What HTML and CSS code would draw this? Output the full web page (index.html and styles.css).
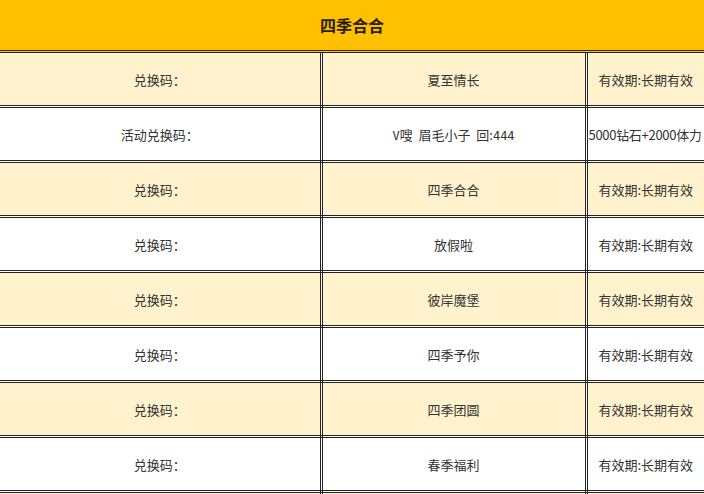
FILE: index.html
```html
<!DOCTYPE html>
<html lang="zh-CN">
<head>
<meta charset="utf-8">
<title>四季合合</title>
<link rel="stylesheet" href="styles.css">
</head>
<body>
<table class="codes">
  <colgroup>
    <col class="c-label">
    <col class="c-code">
    <col class="c-note">
  </colgroup>
  <thead>
    <tr><th colspan="3">四季合合</th></tr>
  </thead>
  <tbody>
    <tr class="cream"><td>兑换码：</td><td>夏至情长</td><td>有效期:长期有效</td></tr>
    <tr><td>活动兑换码：</td><td><span class="mono">V</span>嗖&nbsp;&nbsp;眉毛小子&nbsp;&nbsp;回:<span class="mono">444</span></td><td class="tight">5000钻石+2000体力</td></tr>
    <tr class="cream"><td>兑换码：</td><td>四季合合</td><td>有效期:长期有效</td></tr>
    <tr><td>兑换码：</td><td>放假啦</td><td>有效期:长期有效</td></tr>
    <tr class="cream"><td>兑换码：</td><td>彼岸魔堡</td><td>有效期:长期有效</td></tr>
    <tr><td>兑换码：</td><td>四季予你</td><td>有效期:长期有效</td></tr>
    <tr class="cream"><td>兑换码：</td><td>四季团圆</td><td>有效期:长期有效</td></tr>
    <tr><td>兑换码：</td><td>春季福利</td><td>有效期:长期有效</td></tr>
    <tr class="cream stub"><td></td><td></td><td></td></tr>
  </tbody>
</table>
</body>
</html>
```

FILE: styles.css
```css
html, body {
  margin: 0;
  padding: 0;
  background: #ffffff;
  overflow: hidden;
}

.codes {
  width: 704px;
  border-collapse: collapse;
  table-layout: fixed;
  font-family: "Noto Sans CJK SC", "Noto Sans", sans-serif;
  font-size: 13px;
  color: #333333;
}

.c-label { width: 321px; }
.c-code { width: 265px; }
.c-note { width: 118px; }

.codes th {
  height: 50px;
  padding: 0;
  background: #ffc000;
  font-size: 16px;
  font-weight: 700;
  color: #2a2000;
  text-align: center;
  border-bottom: 3px double #222222;
}

.codes td {
  height: 52px;
  padding: 0;
  text-align: center;
  white-space: nowrap;
  overflow: hidden;
  border: 3px double #222222;
}

.codes tr td:first-child { border-left: none; }
.codes tr td:last-child { border-right: none; }

.codes tr.cream td { background: #fff2cc; }

.codes td.tight {
  text-align: left;
  padding-left: 1px;
  letter-spacing: -0.3px;
}

.mono {
  font-family: "DejaVu Sans Mono", monospace;
  font-size: 12px;
}
```
